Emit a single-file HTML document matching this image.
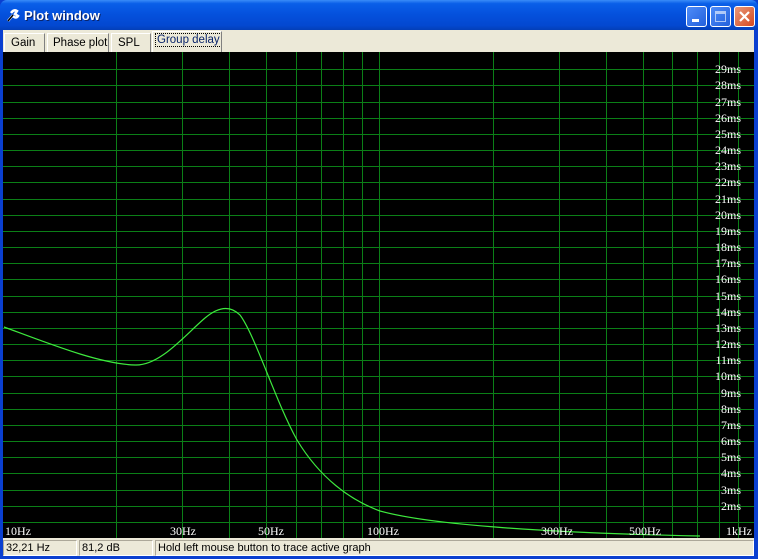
<!DOCTYPE html>
<html><head><meta charset="utf-8"><style>
*{margin:0;padding:0;box-sizing:border-box}
body{width:758px;height:559px;overflow:hidden;background:#0a3fd0;font-family:"Liberation Sans",sans-serif;position:relative}
.title{position:absolute;left:0;top:0;width:758px;height:30px;background:linear-gradient(#3a8cf8 0,#0a5fe8 12%,#0450dc 50%,#0348d0 85%,#033fb8 100%);border-radius:7px 7px 0 0}
.title span{position:absolute;left:24px;top:8px;color:#fff;font-weight:bold;font-size:13px;text-shadow:1px 1px #0a246a}
.btn{position:absolute;top:6px;width:21px;height:21px;border:1px solid #fff;border-radius:3px;background:linear-gradient(135deg,#4e8cf8,#2360dc)}
.tabs{position:absolute;left:3px;top:30px;width:751px;height:22px;background:#ece9d8}
.tab{position:absolute;top:3px;height:19px;font-size:11.5px;white-space:nowrap;overflow:hidden;color:#000;padding:3px 0 0 6px;border-right:1px solid #808080;border-left:1px solid #fff;border-top:1px solid #fff}
.status{position:absolute;left:3px;top:538px;width:751px;height:18px;background:#ece9d8}
.sp{position:absolute;top:2px;height:16px;border:1px solid #aca899;border-right-color:#fff;border-bottom-color:#fff;font-size:11px;padding:1px 0 0 2px}
</style></head><body>
<div class="title">
<svg style="position:absolute;left:6px;top:8px" width="14" height="14"><path d="M2 13 L7 7 M5 5 Q8 1 11 3 L9 6 L12 8 Q10 11 7 8" stroke="#fff" stroke-width="2.5" fill="none"/><path d="M2 13 L7 7" stroke="#000" stroke-width="1.5"/></svg>
<span>Plot window</span>
<div class="btn" style="left:686px"><div style="position:absolute;left:5px;top:12px;width:7px;height:3px;background:#fff"></div></div>
<div class="btn" style="left:710px"><div style="position:absolute;left:4px;top:4px;width:11px;height:11px;border:1px solid #fff;border-top-width:3px;opacity:.6"></div></div>
<div class="btn" style="left:734px;background:linear-gradient(135deg,#e8987a,#d64a20)"><svg width="19" height="19"><path d="M5 5L14 14M14 5L5 14" stroke="#fff" stroke-width="2.2"/></svg></div>
</div>
<div class="tabs">
<div class="tab" style="left:1px;width:41px">Gain</div>
<div class="tab" style="left:44px;width:62px;padding-left:5px">Phase plot</div>
<div class="tab" style="left:108px;width:40px">SPL</div>
<div class="tab" style="left:149px;top:1px;height:21px;width:70px;padding:2px 0 0 3px;color:#0a246a"><span style="outline:1px dotted #000;padding:0 1px">Group delay</span></div>
</div>
<svg style="position:absolute;left:0;top:0" width="758" height="559">
<rect x="3" y="52" width="751" height="486" fill="#000"/>
<g stroke="#0b7f17" stroke-width="1" shape-rendering="crispEdges">
<path d="M116.5 52V538M182.5 52V538M229.5 52V538M266.5 52V538M296.5 52V538M321.5 52V538M343.5 52V538M362.5 52V538M379.5 52V538M493.5 52V538M559.5 52V538M606.5 52V538M643.5 52V538M672.5 52V538M697.5 52V538M719.5 52V538M738.5 52V538"/>
<path d="M3 522.5H754M3 506.5H754M3 490.5H754M3 473.5H754M3 457.5H754M3 441.5H754M3 425.5H754M3 409.5H754M3 393.5H754M3 376.5H754M3 360.5H754M3 344.5H754M3 328.5H754M3 312.5H754M3 296.5H754M3 279.5H754M3 263.5H754M3 247.5H754M3 231.5H754M3 215.5H754M3 199.5H754M3 182.5H754M3 166.5H754M3 150.5H754M3 134.5H754M3 118.5H754M3 102.5H754M3 85.5H754M3 69.5H754"/>
</g>
<path fill="none" stroke="#3ee83e" stroke-width="1.2" d="M4,327 C50,344 100,364 135,365 C160,366 185,335 205,318 C218,307 230,305 240,315 C255,335 275,400 297,440 C320,478 350,500 380,511 C430,525 550,533 700,536"/>
<g fill="#fff" font-family="Liberation Serif,serif" font-size="12" text-anchor="end">
<text x="741" y="510">2ms</text><text x="741" y="494">3ms</text><text x="741" y="477">4ms</text><text x="741" y="461">5ms</text><text x="741" y="445">6ms</text><text x="741" y="429">7ms</text><text x="741" y="413">8ms</text><text x="741" y="397">9ms</text><text x="741" y="380">10ms</text><text x="741" y="364">11ms</text><text x="741" y="348">12ms</text><text x="741" y="332">13ms</text><text x="741" y="316">14ms</text><text x="741" y="300">15ms</text><text x="741" y="283">16ms</text><text x="741" y="267">17ms</text><text x="741" y="251">18ms</text><text x="741" y="235">19ms</text><text x="741" y="219">20ms</text><text x="741" y="203">21ms</text><text x="741" y="186">22ms</text><text x="741" y="170">23ms</text><text x="741" y="154">24ms</text><text x="741" y="138">25ms</text><text x="741" y="122">26ms</text><text x="741" y="106">27ms</text><text x="741" y="89">28ms</text><text x="741" y="73">29ms</text>
</g>
<g fill="#fff" font-family="Liberation Serif,serif" font-size="12">
<text x="5" y="535">10Hz</text><text x="170" y="535">30Hz</text><text x="258" y="535">50Hz</text><text x="367" y="535">100Hz</text><text x="541" y="535">300Hz</text><text x="629" y="535">500Hz</text><text x="726" y="535">1kHz</text>
</g>
</svg>
<div class="status">
<div class="sp" style="left:0;width:74px">32,21 Hz</div>
<div class="sp" style="left:76px;width:74px">81,2 dB</div>
<div class="sp" style="left:152px;width:599px">Hold left mouse button to trace active graph</div>
</div>
</body></html>
